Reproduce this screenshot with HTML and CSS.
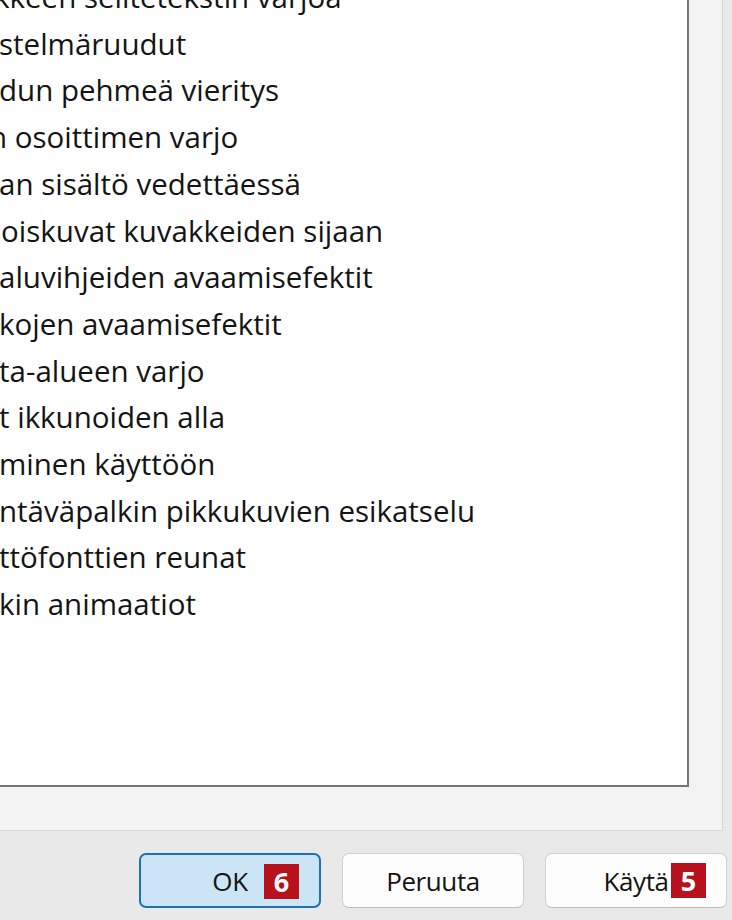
FILE: index.html
```html
<!DOCTYPE html>
<html lang="fi">

<head>
  <meta charset="UTF-8" />
  <title>Suorituskykyasetukset</title>
  <link rel="stylesheet" href="styles.css">
</head>

<body>
  <div class="panel">
    <div class="list">
      <ul class="effects">
        <li class="cut-k">kkeen selitetekstin varjoa</li>
        <li>stelmäruudut</li>
        <li>dun pehmeä vieritys</li>
        <li class="cut-n">n osoittimen varjo</li>
        <li>an sisältö vedettäessä</li>
        <li class="cut-n2">noiskuvat kuvakkeiden sijaan</li>
        <li>aluvihjeiden avaamisefektit</li>
        <li>kojen avaamisefektit</li>
        <li>ta-alueen varjo</li>
        <li>t ikkunoiden alla</li>
        <li>minen käyttöön</li>
        <li>ntäväpalkin pikkukuvien esikatselu</li>
        <li>ttöfonttien reunat</li>
        <li>kin animaatiot</li>
      </ul>
    </div>
  </div>

  <div class="actions">
    <button class="btn btn-default" type="button">OK<span class="badge">6</span></button>
    <button class="btn" type="button">Peruuta</button>
    <button class="btn" type="button">Käytä<span class="badge">5</span></button>
  </div>
</body>

</html>
```

FILE: styles.css
```css
* {
  margin: 0;
  padding: 0;
  box-sizing: border-box;
}

body {
  width: 732px;
  height: 920px;
  overflow: hidden;
  background: #e9e9e9;
  font-family: 'Open Sans', 'Noto Sans', sans-serif;
  color: #141414;
}

.panel {
  width: 723px;
  height: 831px;
  background: #f3f3f3;
  border-right: 1px solid #d8d8d8;
  border-bottom: 1px solid #d8d8d8;
}

.list {
  width: 689px;
  height: 787px;
  background: #fff;
  border-right: 2px solid #72767b;
  border-bottom: 2px solid #72767b;
  overflow: hidden;
}

.effects {
  list-style: none;
  margin-top: -26px;
  margin-left: -1px;
}

.effects li {
  font-size: 29.5px;
  line-height: 46.7px;
  white-space: nowrap;
}

.effects .cut-k {
  margin-left: -5px;
}

.effects .cut-n {
  margin-left: -10px;
}

.effects .cut-n2 {
  margin-left: -16px;
}

.actions {
  display: flex;
  justify-content: flex-end;
  gap: 21px;
  padding: 22px 5px 0 0;
}

.btn {
  position: relative;
  width: 182px;
  height: 55px;
  border: 1px solid #d0d0d0;
  border-bottom-color: #bdbdbd;
  border-radius: 7px;
  background: #fdfdfd;
  font-family: 'Open Sans', 'Noto Sans', sans-serif;
  font-size: 26px;
  color: #141414;
  letter-spacing: -0.4px;
}

.btn-default {
  border: 2px solid #1a72b8;
  background: #cce5f6;
}

.badge {
  position: absolute;
  top: 9px;
  right: 20px;
  width: 35px;
  height: 35px;
  background: #b7121c;
  color: #fff;
  font-family: 'Open Sans', sans-serif;
  font-weight: 700;
  font-size: 27px;
  line-height: 35px;
  text-align: center;
  letter-spacing: 0;
}
```
